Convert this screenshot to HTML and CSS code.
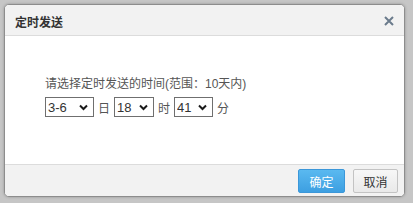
FILE: index.html
```html
<!DOCTYPE html>
<html lang="zh">
<head>
    <meta charset="UTF-8">
    <meta name="viewport" content="width=device-width, initial-scale=1.0">
    <title>定时发送</title>
    <link rel="stylesheet" href="styles.css">
</head>
<body>
    <div class="dialog">
        <div class="dialog-header">
            <span class="dialog-title">定时发送</span>
            <span class="dialog-close">
                <svg width="10" height="10" viewBox="0 0 10 10"><path d="M1 1 L9 9 M9 1 L1 9" stroke="#6b7b8c" stroke-width="2" fill="none"/></svg>
            </span>
        </div>
        <div class="dialog-body">
            <div class="tip">请选择定时发送的时间(范围：10天内)</div>
            <div class="time-row">
                <span class="sel sel-day">
                    <select><option>3-6</option></select>
                    <svg class="arrow" width="9" height="7" viewBox="0 0 9 7"><path d="M1 1.5 L4.5 5 L8 1.5" stroke="#1a1a1a" stroke-width="2" fill="none"/></svg>
                </span>
                <span class="unit">日</span>
                <span class="sel sel-hour">
                    <select><option>18</option></select>
                    <svg class="arrow" width="9" height="7" viewBox="0 0 9 7"><path d="M1 1.5 L4.5 5 L8 1.5" stroke="#1a1a1a" stroke-width="2" fill="none"/></svg>
                </span>
                <span class="unit">时</span>
                <span class="sel sel-min">
                    <select><option>41</option></select>
                    <svg class="arrow" width="9" height="7" viewBox="0 0 9 7"><path d="M1 1.5 L4.5 5 L8 1.5" stroke="#1a1a1a" stroke-width="2" fill="none"/></svg>
                </span>
                <span class="unit">分</span>
            </div>
        </div>
        <div class="dialog-footer">
            <button class="btn btn-ok">确定</button>
            <button class="btn btn-cancel">取消</button>
        </div>
    </div>
</body>
</html>
```

FILE: styles.css
```css
body {
    margin: 0;
    padding: 4px 0 0 4px;
    background-color: #c6c6c6;
    font-family: "Liberation Sans", "Noto Sans CJK SC", sans-serif;
    font-size: 12px;
    color: #555;
    overflow: hidden;
    height: 203px;
    box-sizing: border-box;
}
.dialog {
    width: 401px;
    box-sizing: border-box;
    border: 1px solid #8d8d8d;
    border-radius: 5px;
    background-color: #fff;
    box-shadow: 0 0 3px rgba(0, 0, 0, 0.25);
    overflow: hidden;
}
.dialog-header {
    height: 30px;
    background-color: #f2f2f2;
    border-bottom: 1px solid #dcdcdc;
    display: flex;
    align-items: center;
    justify-content: space-between;
    padding: 0 10px 0 10px;
}
.dialog-title {
    font-size: 12px;
    font-weight: bold;
    color: #333;
    padding-top: 2px;
}
.dialog-close {
    display: flex;
    margin-top: 1px;
}
.dialog-body {
    height: 128px;
    box-sizing: border-box;
    padding: 39px 0 0 40px;
}
.tip {
    line-height: 18px;
    color: #555;
    text-spacing-trim: space-all;
}
.time-row {
    margin-top: 4px;
    display: flex;
    align-items: center;
    height: 20px;
}
.sel {
    position: relative;
    display: inline-block;
    height: 20px;
}
.sel select {
    appearance: none;
    -webkit-appearance: none;
    height: 20px;
    box-sizing: border-box;
    border: 1px solid #6f6f6f;
    border-radius: 0;
    background: #fff;
    font-family: "Liberation Sans", sans-serif;
    font-size: 13px;
    color: #333;
    padding: 0 0 0 2px;
    margin: 0;
    outline: none;
}
.sel .arrow {
    position: absolute;
    right: 6px;
    top: 7px;
    pointer-events: none;
}
.sel-day select {
    width: 49px;
}
.sel-hour select {
    width: 40px;
}
.sel-min select {
    width: 39px;
}
.unit {
    color: #555;
    padding: 0 4px;
}
.dialog-footer {
    height: 31px;
    background-color: #f2f2f2;
    border-top: 1px solid #dcdcdc;
    display: flex;
    justify-content: flex-end;
    align-items: center;
    gap: 8px;
    padding-right: 6px;
}
.btn {
    height: 24px;
    box-sizing: border-box;
    font-family: "Liberation Sans", "Noto Sans CJK SC", sans-serif;
    font-size: 12px;
    border-radius: 2px;
    padding: 0;
    margin-top: 1px;
}
.btn-ok {
    width: 47px;
    color: #fff;
    border: 1px solid #3b97d9;
    background: linear-gradient(#5ab9f0, #3d9fe1);
}
.btn-cancel {
    width: 45px;
    color: #333;
    border: 1px solid #c3c3c3;
    background: linear-gradient(#f7f7f7, #e9e9e9);
}
```
